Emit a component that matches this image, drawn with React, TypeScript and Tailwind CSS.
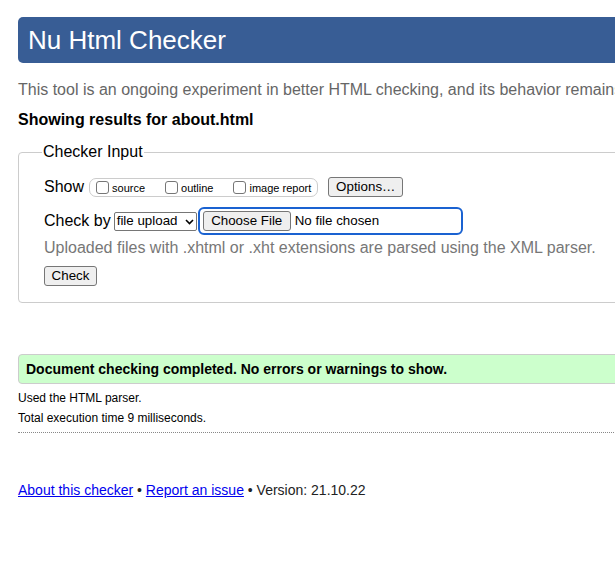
import React from "react";

function Box({ label, gap }: { label: string; gap?: boolean }) {
  return (
    <label className={`flex items-center ${gap ? "ml-[20px]" : ""}`}>
      <input
        type="checkbox"
        className="appearance-none w-[13px] h-[13px] border border-[#767676] rounded-[3px] bg-white m-0"
      />
      <span className="ml-[3px] text-[11px] leading-[13px] text-black relative top-[1px]">{label}</span>
    </label>
  );
}

function Btn({ children, className = "" }: { children: React.ReactNode; className?: string }) {
  return (
    <button
      className={`h-[20px] bg-[#efefef] border border-[#767676] rounded-[3px] text-[13.33px] leading-[18px] text-black flex items-center justify-center ${className}`}
    >
      {children}
    </button>
  );
}

export default function App() {
  return (
    <div className="w-[615px] h-[575px] overflow-hidden bg-white text-black font-['Liberation_Sans',Arial,sans-serif]">
      <div className="w-[1000px] pl-[18px] pt-[17px]">
        <div className="h-[46px] rounded-[5px] bg-[#385d95] flex items-center pl-[10px] text-[26px] text-white">
          Nu Html Checker
        </div>
        <p className="mt-[18px] text-[16px] leading-[18px] text-[#666666] whitespace-nowrap">
          This tool is an ongoing experiment in better HTML checking, and its behavior remains
          subject to change
        </p>
        <p className="mt-[12px] text-[16px] leading-[18px] font-bold">Showing results for about.html</p>

        <fieldset className="mt-[14px] border border-[#cccccc] rounded-[4px] pl-[25px] pt-[16px] pb-[16px]">
          <legend className="text-[16px] leading-[18px] ml-[-2px] px-[1px]">Checker Input</legend>
          <div className="flex items-center h-[20px]">
            <span className="text-[16px] leading-[18px]">Show</span>
            <div className="ml-[5px] h-[19px] border border-[#cccccc] rounded-[7px] flex items-center pl-[6px] pr-[6px]">
              <Box label="source" />
              <Box label="outline" gap />
              <Box label="image report" gap />
            </div>
            <Btn className="ml-[10px] w-[75px]">Options…</Btn>
          </div>
          <div className="flex items-center mt-[10px] h-[28px]">
            <span className="text-[16px] leading-[18px]">Check by</span>
            <div className="ml-[3px] w-[83px] h-[19px] border border-[#767676] rounded-[2px] bg-white flex items-center justify-between pl-[2px] pr-[2px] text-[13.33px]">
              <span>file upload</span>
              <svg width="9" height="6" viewBox="0 0 9 6" className="mt-[1px]">
                <path d="M1 1 L4.5 4.5 L8 1" fill="none" stroke="#000" strokeWidth="1.6" />
              </svg>
            </div>
            <div className="ml-[1px] w-[265px] h-[28px] border-[2px] border-[#1a62d1] rounded-[6px] flex items-center pl-[3px]">
              <Btn className="w-[88px]">Choose File</Btn>
              <span className="ml-[4px] text-[13.33px]">No file chosen</span>
            </div>
          </div>
          <p className="mt-[4px] text-[16px] leading-[18px] text-[#777777]">
            Uploaded files with .xhtml or .xht extensions are parsed using the XML parser.
          </p>
          <Btn className="mt-[9px] w-[53px]">Check</Btn>
        </fieldset>

        <div className="mt-[51px] h-[30px] bg-[#ccffcc] border border-[#cccccc] rounded-[4px] flex items-center pl-[7px] text-[14px] font-bold">
          Document checking completed. No errors or warnings to show.
        </div>
        <p className="mt-[7px] text-[12px] leading-[14px]">Used the HTML parser.</p>
        <p className="mt-[6px] text-[12px] leading-[14px]">Total execution time 9 milliseconds.</p>
        <div className="mt-[7px] border-b border-dotted border-[#888888]" />

        <p className="mt-[48px] text-[14px] leading-[18px] text-[#222222]">
          <a href="#" className="text-[#0000ee] underline">About this checker</a>
          {" • "}
          <a href="#" className="text-[#0000ee] underline">Report an issue</a>
          {" • Version: 21.10.22"}
        </p>
      </div>
    </div>
  );
}
